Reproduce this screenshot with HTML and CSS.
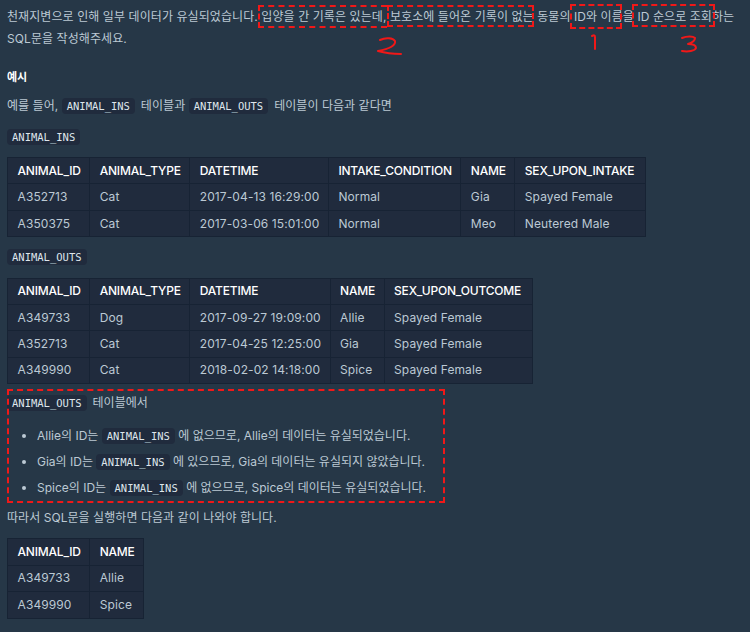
FILE: index.html
```html
<!DOCTYPE html>
<html lang="ko">
<head>
<meta charset="utf-8">
<title>Lost records</title>
<link rel="stylesheet" href="styles.css">
</head>
<body>
<main class="page">
<p class="intro">천재지변으로 인해 일부 데이터가 유실되었습니다. 입양을 간 기록은 있는데, 보호소에 들어온 기록이 없는 동물의 ID와 이름을 ID 순으로 조회하는 SQL문을 작성해주세요.</p>
<h5 class="heading">예시</h5>
<p class="para">예를 들어, <code>ANIMAL_INS</code> 테이블과 <code>ANIMAL_OUTS</code> 테이블이 다음과 같다면</p>
<p class="para para-label"><code>ANIMAL_INS</code></p>
<table class="wide">
<thead><tr><th>ANIMAL_ID</th><th>ANIMAL_TYPE</th><th>DATETIME</th><th>INTAKE_CONDITION</th><th>NAME</th><th>SEX_UPON_INTAKE</th></tr></thead>
<tbody>
<tr><td>A352713</td><td>Cat</td><td>2017-04-13 16:29:00</td><td>Normal</td><td>Gia</td><td>Spayed Female</td></tr>
<tr><td>A350375</td><td>Cat</td><td>2017-03-06 15:01:00</td><td>Normal</td><td>Meo</td><td>Neutered Male</td></tr>
</tbody>
</table>
<p class="para para-label"><code>ANIMAL_OUTS</code></p>
<table class="wide">
<thead><tr><th>ANIMAL_ID</th><th>ANIMAL_TYPE</th><th>DATETIME</th><th>NAME</th><th>SEX_UPON_OUTCOME</th></tr></thead>
<tbody>
<tr><td>A349733</td><td>Dog</td><td>2017-09-27 19:09:00</td><td>Allie</td><td>Spayed Female</td></tr>
<tr><td>A352713</td><td>Cat</td><td>2017-04-25 12:25:00</td><td>Gia</td><td>Spayed Female</td></tr>
<tr><td>A349990</td><td>Cat</td><td>2018-02-02 14:18:00</td><td>Spice</td><td>Spayed Female</td></tr>
</tbody>
</table>
<p class="para para-tight"><code>ANIMAL_OUTS</code> 테이블에서</p>
<ul class="list">
<li>Allie의 ID는 <code>ANIMAL_INS</code> 에 없으므로, Allie의 데이터는 유실되었습니다.</li>
<li>Gia의 ID는 <code>ANIMAL_INS</code> 에 있으므로, Gia의 데이터는 유실되지 않았습니다.</li>
<li>Spice의 ID는 <code>ANIMAL_INS</code> 에 없으므로, Spice의 데이터는 유실되었습니다.</li>
</ul>
<p class="para para-result">따라서 SQL문을 실행하면 다음과 같이 나와야 합니다.</p>
<table>
<thead><tr><th>ANIMAL_ID</th><th>NAME</th></tr></thead>
<tbody>
<tr><td>A349733</td><td>Allie</td></tr>
<tr><td>A349990</td><td>Spice</td></tr>
</tbody>
</table>
</main>
<div class="mark mark-a"></div>
<div class="mark mark-b"></div>
<div class="mark mark-c"></div>
<div class="mark mark-d"></div>
<div class="mark mark-e"></div>
<svg class="scribble" width="750" height="60" viewBox="0 0 750 60" fill="none" stroke="#f01818" stroke-width="2" stroke-linecap="round" stroke-linejoin="round" aria-hidden="true">
<path d="M380 40 C386 37 393 38 395 41 C396 45 390 49 378 51 C385 53 394 54 401 54"/>
<path d="M592 36 C594 35 595 35 595 37 L595 49"/>
<path d="M682 38 C687 36 693 36 695 38 C695 41 691 43 688 44 C692 44 696 45 696 48 C695 51 688 52 682 51"/>
</svg>
</body>
</html>
```
FILE: styles.css
```css
* { box-sizing: border-box; }
html, body { margin: 0; padding: 0; }
body {
  width: 750px;
  height: 632px;
  overflow: hidden;
  position: relative;
  background: #263747;
  color: #bcc9d4;
  font-family: Inter, "Noto Sans CJK KR", "Noto Sans", sans-serif;
  font-size: 12px;
  line-height: 22.4px;
}
.page { padding: 6px 0 0 7px; }
.intro { margin: 0 0 15px; letter-spacing: 0.08px; }
.heading { margin: 0 0 7px; font-size: 11px; line-height: 22.4px; color: #fff; font-weight: 700; }
.para { margin: 0 0 8px; letter-spacing: 0.05px; }
.para-label { margin-bottom: 9px; }
.para-tight { margin: -1px 0 10px; }
.para-result { margin: 8px 0 9px; }
code {
  font-family: "DejaVu Sans Mono", monospace;
  font-size: 10.5px;
  letter-spacing: 0;
  color: #dfe6ec;
  background: #202b3d;
  border-radius: 4px;
  padding: 2px 5px;
  margin: 0 2.5px 0 0;
}
.list code { margin: 0; }
table { border-collapse: collapse; margin: 0 0 9px; background: #202b3d; }
th, td { border: 1px solid #172334; padding: 0 8.5px 0 9.5px; height: 26.4px; text-align: left; font-weight: 400; white-space: nowrap; line-height: 18px; }
th { color: #fff; font-weight: 500; letter-spacing: -0.2px; }
td { letter-spacing: 0.1px; }
.wide th:last-child { padding-right: 10.5px; }
.list { margin: 0; padding: 0 0 0 30px; }
.list li { margin: 0 0 3.6px; }
.mark { position: absolute; border: 2px dashed #f01818; }
.mark-a { left: 258px; top: 5px; width: 129px; height: 23px; border-right: none; }
.mark-b { left: 387px; top: 5px; width: 147px; height: 22px; }
.mark-c { left: 570px; top: 4px; width: 52px; height: 25px; }
.mark-d { left: 632px; top: 4px; width: 83px; height: 23px; }
.mark-e { left: 7px; top: 389px; width: 438px; height: 114px; }
.scribble { position: absolute; left: 0; top: 0; }
```
